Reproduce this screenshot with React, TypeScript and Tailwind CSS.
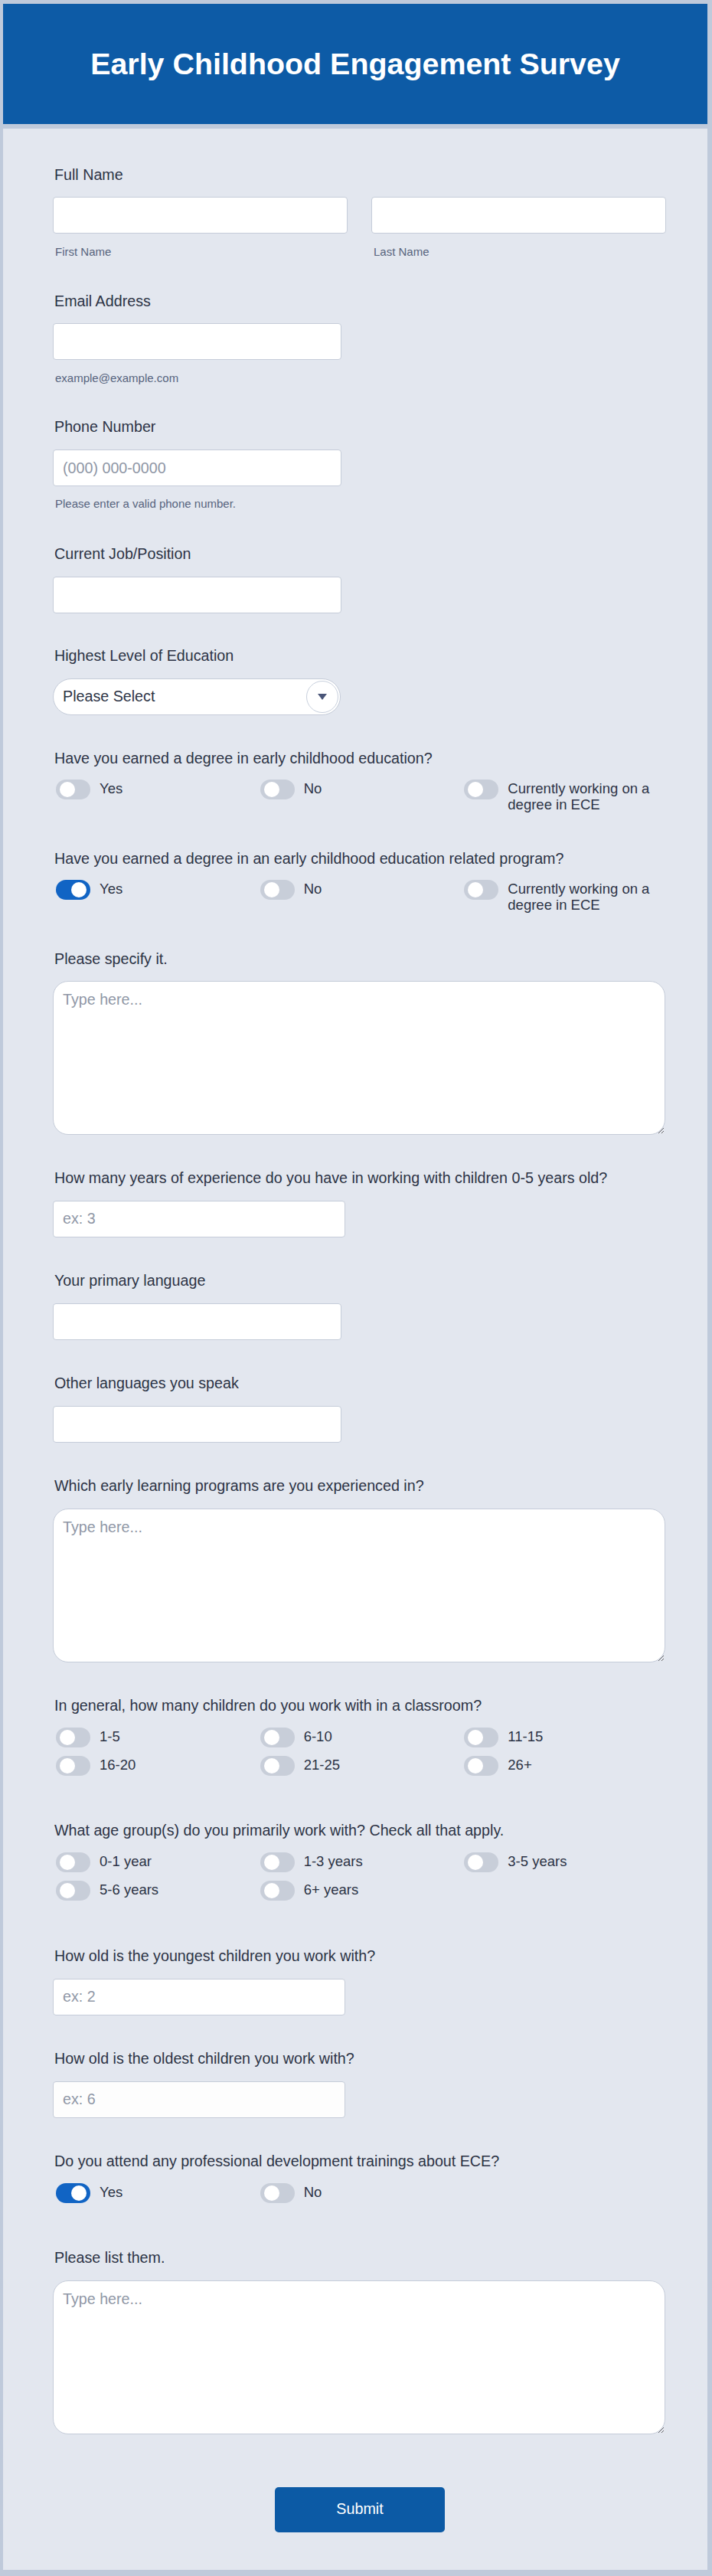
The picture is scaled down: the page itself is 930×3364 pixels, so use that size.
import React from 'react'

const FONT = { fontFamily: '"Liberation Sans", Arial, Helvetica, sans-serif' }

const labelCls = 'block pl-[2px] text-[19.7px] leading-[24px] text-[#2c3345]'
const subCls = 'block pl-[3px] text-[15px] leading-[18px] text-[#57647e]'
const inputCls =
  'block h-[48px] rounded-[4px] border border-[#c5ccd9] bg-white px-[12px] text-[19.7px] text-[#2c3345] outline-none placeholder:text-[#8f97a6]'
const textareaCls =
  'block h-[201px] w-[800px] rounded-[20px] border border-[#c5ccd9] bg-white px-[12px] pt-[11px] text-[19.7px] leading-[24px] text-[#2c3345] outline-none placeholder:text-[#8f97a6]'

type Opt = { label: string; on?: boolean }

const Toggle: React.FC<{ on?: boolean }> = ({ on }) => (
  <span
    className={`ml-[4px] flex h-[26px] w-[45px] shrink-0 items-center rounded-full px-[5px] ${
      on ? 'justify-end bg-[#1164c4]' : 'justify-start bg-[#c8ced9]'
    }`}
  >
    <span className="h-[20px] w-[20px] rounded-full bg-white" />
  </span>
)

const OptionGrid: React.FC<{ options: Opt[]; className: string }> = ({ options, className }) => (
  <div className={`grid grid-cols-3 gap-y-[11px] ${className}`}>
    {options.map((o) => (
      <label key={o.label} className="flex items-start">
        <Toggle on={o.on} />
        <span className="ml-[12px] pt-[1px] text-[18.5px] leading-[21px] text-[#2c3345]">{o.label}</span>
      </label>
    ))}
  </div>
)

export default function App() {
  return (
    <div style={FONT} className="min-h-screen bg-[#bfcadb] pb-[6px] pl-[4px] pr-[6px] pt-[5px]">
      {/* header */}
      <header className="flex h-[157px] items-center justify-center bg-[#0d5ba6]">
        <h1 className="text-[39.4px] font-bold leading-none text-white">Early Childhood Engagement Survey</h1>
      </header>

      {/* form body */}
      <main className="mt-[6px] bg-[#e3e7ef] pb-[49.5px] pl-[65px] pt-[48px]">
        <form className="flex w-[800px] flex-col" onSubmit={(e) => e.preventDefault()}>
          {/* Full name */}
          <span className={labelCls}>Full Name</span>
          <div className="mt-[17px] flex gap-[31px]">
            <div className="w-[385px]">
              <input className={`${inputCls} w-[385px]`} />
              <span className={`${subCls} mt-[15px]`}>First Name</span>
            </div>
            <div className="w-[385px]">
              <input className={`${inputCls} w-[385px]`} />
              <span className={`${subCls} mt-[15px]`}>Last Name</span>
            </div>
          </div>

          {/* Email */}
          <span className={`${labelCls} mt-[43px]`}>Email Address</span>
          <input className={`${inputCls} mt-[17px] w-[377px]`} />
          <span className={`${subCls} mt-[15px]`}>example@example.com</span>

          {/* Phone */}
          <span className={`${labelCls} mt-[42px]`}>Phone Number</span>
          <input className={`${inputCls} mt-[18px] w-[377px]`} placeholder="(000) 000-0000" />
          <span className={`${subCls} mt-[14px]`}>Please enter a valid phone number.</span>

          {/* Job */}
          <span className={`${labelCls} mt-[43.5px]`}>Current Job/Position</span>
          <input className={`${inputCls} mt-[18px] w-[377px]`} />

          {/* Education */}
          <span className={`${labelCls} mt-[43.5px]`}>Highest Level of Education</span>
          <div className="mt-[18px] flex h-[48px] w-[376px] items-center justify-between rounded-full border border-[#c5ccd9] bg-white pl-[12px] pr-[2px]">
            <span className="text-[19.7px] text-[#2c3345]">Please Select</span>
            <span className="flex h-[42px] w-[42px] items-center justify-center rounded-full border border-[#c8d0dd] bg-white">
              <svg width="12" height="8" viewBox="0 0 12 8">
                <polygon points="0,0 12,0 6,8" fill="#4a5578" />
              </svg>
            </span>
          </div>

          {/* Degree ECE */}
          <span className={`${labelCls} mt-[44px]`}>Have you earned a degree in early childhood education?</span>
          <OptionGrid
            className="mt-[16px]"
            options={[{ label: 'Yes' }, { label: 'No' }, { label: 'Currently working on a degree in ECE' }]}
          />

          <span className={`${labelCls} mt-[48px]`}>
            Have you earned a degree in an early childhood education related program?
          </span>
          <OptionGrid
            className="mt-[16px]"
            options={[{ label: 'Yes', on: true }, { label: 'No' }, { label: 'Currently working on a degree in ECE' }]}
          />

          <span className={`${labelCls} mt-[47.5px]`}>Please specify it.</span>
          <textarea className={`${textareaCls} mt-[17.5px]`} placeholder="Type here..." />

          <span className={`${labelCls} mt-[44px]`}>
            How many years of experience do you have in working with children 0-5 years old?
          </span>
          <input className={`${inputCls} mt-[17.5px] w-[382px]`} placeholder="ex: 3" />

          <span className={`${labelCls} mt-[44.5px]`}>Your primary language</span>
          <input className={`${inputCls} mt-[17.5px] w-[377px]`} />

          <span className={`${labelCls} mt-[44.5px]`}>Other languages you speak</span>
          <input className={`${inputCls} mt-[17.5px] w-[377px]`} />

          <span className={`${labelCls} mt-[44.5px]`}>Which early learning programs are you experienced in?</span>
          <textarea className={`${textareaCls} mt-[17.5px]`} placeholder="Type here..." />

          <span className={`${labelCls} mt-[44.5px]`}>In general, how many children do you work with in a classroom?</span>
          <OptionGrid
            className="mt-[16.5px]"
            options={[
              { label: '1-5' },
              { label: '6-10' },
              { label: '11-15' },
              { label: '16-20' },
              { label: '21-25' },
              { label: '26+' },
            ]}
          />

          <span className={`${labelCls} mt-[59.5px]`}>What age group(s) do you primarily work with? Check all that apply.</span>
          <OptionGrid
            className="mt-[17px]"
            options={[
              { label: '0-1 year' },
              { label: '1-3 years' },
              { label: '3-5 years' },
              { label: '5-6 years' },
              { label: '6+ years' },
            ]}
          />

          <span className={`${labelCls} mt-[60px]`}>How old is the youngest children you work with?</span>
          <input className={`${inputCls} mt-[17.5px] w-[382px]`} placeholder="ex: 2" />

          <span className={`${labelCls} mt-[44.5px]`}>How old is the oldest children you work with?</span>
          <input className={`${inputCls} mt-[17.5px] w-[382px] !bg-[#fdfdfd]`} placeholder="ex: 6" />

          <span className={`${labelCls} mt-[44px]`}>Do you attend any professional development trainings about ECE?</span>
          <OptionGrid className="mt-[17.5px]" options={[{ label: 'Yes', on: true }, { label: 'No' }]} />

          <span className={`${labelCls} mt-[59px]`}>Please list them.</span>
          <textarea className={`${textareaCls} mt-[18px]`} placeholder="Type here..." />

          <div className="mt-[68.5px] flex justify-center">
            <button
              type="submit"
              className="ml-[2px] h-[59px] w-[222px] rounded-[5px] bg-[#0c5aa5] text-[19.7px] text-white"
            >
              Submit
            </button>
          </div>
        </form>
      </main>
    </div>
  )
}
